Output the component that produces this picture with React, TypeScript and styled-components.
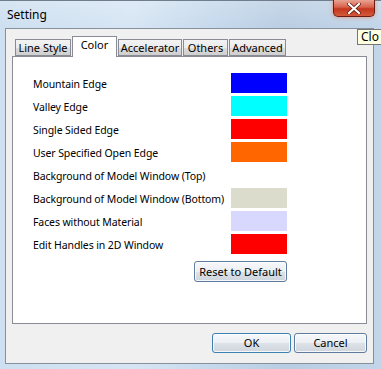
import React from 'react';
import styled, { createGlobalStyle } from 'styled-components';

const GlobalStyle = createGlobalStyle`
  html, body {
    margin: 0;
    padding: 0;
    width: 381px;
    height: 369px;
    overflow: hidden;
  }
  body {
    font-family: "Noto Sans", "Open Sans", sans-serif;
    font-size: 11px;
    color: #000;
  }
`;

const colorRows = [
    { label: 'Mountain Edge', color: '#0000ff' },
    { label: 'Valley Edge', color: '#00ffff' },
    { label: 'Single Sided Edge', color: '#ff0000' },
    { label: 'User Specified Open Edge', color: '#ff6600' },
    { label: 'Background of Model Window (Top)', color: '#ffffff' },
    { label: 'Background of Model Window (Bottom)', color: '#dcdccc' },
    { label: 'Faces without Material', color: '#d8d8ff' },
    { label: 'Edit Handles in 2D Window', color: '#ff0000' },
];

const tabs = [
    { name: 'Line Style', width: 56 },
    { name: 'Color', width: 45 },
    { name: 'Accelerator', width: 64 },
    { name: 'Others', width: 45 },
    { name: 'Advanced', width: 57 },
];

const App: React.FC = () => {
    return <Frame>
        <GlobalStyle />
        <TitleBar>Setting</TitleBar>
        <CloseButton>
            <svg width="14" height="11" viewBox="0 0 14 11">
                <path d="M2 1 L12 10 M12 1 L2 10" stroke="#5a1a10" strokeWidth="3.6" strokeLinecap="round" />
                <path d="M2 1 L12 10 M12 1 L2 10" stroke="#ffffff" strokeWidth="2.2" strokeLinecap="round" />
            </svg>
        </CloseButton>
        <Tooltip>Clo</Tooltip>
        <Client>
            <TabStrip>
                {tabs.map(t => <Tab key={t.name} $width={t.width} $active={t.name === 'Color'}>{t.name}</Tab>)}
            </TabStrip>
            <Panel>
                <ColorGrid>
                    {colorRows.map(r => <React.Fragment key={r.label}>
                        <Label>{r.label}</Label>
                        <Swatch $color={r.color} />
                    </React.Fragment>)}
                </ColorGrid>
                <ResetRow>
                    <Button $width={93} $height={21}>Reset to Default</Button>
                </ResetRow>
            </Panel>
            <Footer>
                <Button $width={79} $height={20} $default>OK</Button>
                <Button $width={73} $height={20}>Cancel</Button>
            </Footer>
        </Client>
    </Frame>
}

const Frame = styled.div`
    position: relative;
    width: 381px;
    height: 369px;
    box-sizing: border-box;
    padding: 27px 7px 5px 5px;
    border-top: 1px solid #6f7d8c;
    background:
        linear-gradient(180deg, rgba(255,255,255,0.2) 0px, rgba(255,255,255,0) 28px),
        linear-gradient(90deg, #cddff0 0%, #d6e5f4 35%, #c6d9ec 55%, #b9cde2 75%, #c2d5e9 100%);
    display: flex;
    flex-direction: column;
`

const TitleBar = styled.div`
    position: absolute;
    left: 7px;
    top: 6px;
    font-size: 12px;
    line-height: 16px;
    color: #000;
`

const CloseButton = styled.div`
    position: absolute;
    left: 333px;
    top: -1px;
    width: 42px;
    height: 17px;
    box-sizing: border-box;
    border: 1px solid #6b1d14;
    border-top: none;
    border-radius: 0 0 5px 5px;
    background: linear-gradient(180deg, #e8a493 0%, #d7604a 45%, #c4361f 55%, #d35a3a 100%);
    box-shadow: 0 0 4px rgba(255, 90, 40, 0.6);
    display: flex;
    align-items: center;
    justify-content: center;
`

const Tooltip = styled.div`
    position: absolute;
    left: 357px;
    top: 28px;
    right: -2px;
    height: 16px;
    box-sizing: border-box;
    padding: 0 3px;
    border: 1px solid #767676;
    background: #ffffe1;
    font-size: 12px;
    line-height: 14px;
    white-space: nowrap;
    z-index: 3;
`

const Client = styled.div`
    flex: 1;
    background: #f0f0f0;
    border: 1px solid #86909c;
    padding: 7px 6px 10px 6px;
    display: flex;
    flex-direction: column;
`

const TabStrip = styled.div`
    display: flex;
    align-items: flex-end;
    height: 20px;
    padding-left: 3px;
    position: relative;
    z-index: 2;
`

const Tab = styled.div<{ $width: number; $active?: boolean }>`
    width: ${p => p.$width}px;
    box-sizing: border-box;
    height: ${p => p.$active ? 21 : 17}px;
    margin-bottom: ${p => p.$active ? -1 : 0}px;
    margin-right: 1px;
    border: 1px solid #898c95;
    border-bottom: ${p => p.$active ? 'none' : '1px solid #898c95'};
    background: ${p => p.$active ? '#ffffff' : 'linear-gradient(180deg, #f3f3f3 0%, #ebebeb 50%, #dddddd 51%, #cfcfcf 100%)'};
    font-size: 11px;
    line-height: ${p => p.$active ? 16 : 15}px;
    text-align: center;
    white-space: nowrap;
`

const Panel = styled.div`
    flex: 1;
    background: #ffffff;
    border: 1px solid #898c95;
    padding: 16px 0 0 20px;
    display: flex;
    flex-direction: column;
`

const ColorGrid = styled.div`
    display: grid;
    grid-template-columns: 198px 56px;
    grid-auto-rows: 20px;
    row-gap: 3px;
`

const Label = styled.div`
    font-size: 10.5px;
    letter-spacing: -0.1px;
    line-height: 20px;
    padding-top: 1px;
    white-space: nowrap;
`

const Swatch = styled.div<{ $color: string }>`
    background: ${p => p.$color};
`

const ResetRow = styled.div`
    width: 254px;
    display: flex;
    justify-content: flex-end;
    margin-top: 7px;
`

const Button = styled.div<{ $width: number; $height: number; $default?: boolean }>`
    width: ${p => p.$width}px;
    height: ${p => p.$height}px;
    box-sizing: border-box;
    border: 1px solid ${p => p.$default ? '#3c7fb1' : '#5f7c9e'};
    border-radius: 3px;
    background: linear-gradient(180deg, #f6f8fb 0%, #eceff3 50%, #dde2e8 51%, #cfd5dc 100%);
    box-shadow: inset 0 0 0 1px rgba(255,255,255,0.8);
    font-size: 11px;
    line-height: ${p => p.$height - 2}px;
    text-align: center;
    white-space: nowrap;
`

const Footer = styled.div`
    display: flex;
    justify-content: flex-end;
    gap: 3px;
    margin-top: 9px;
`

export default App;
